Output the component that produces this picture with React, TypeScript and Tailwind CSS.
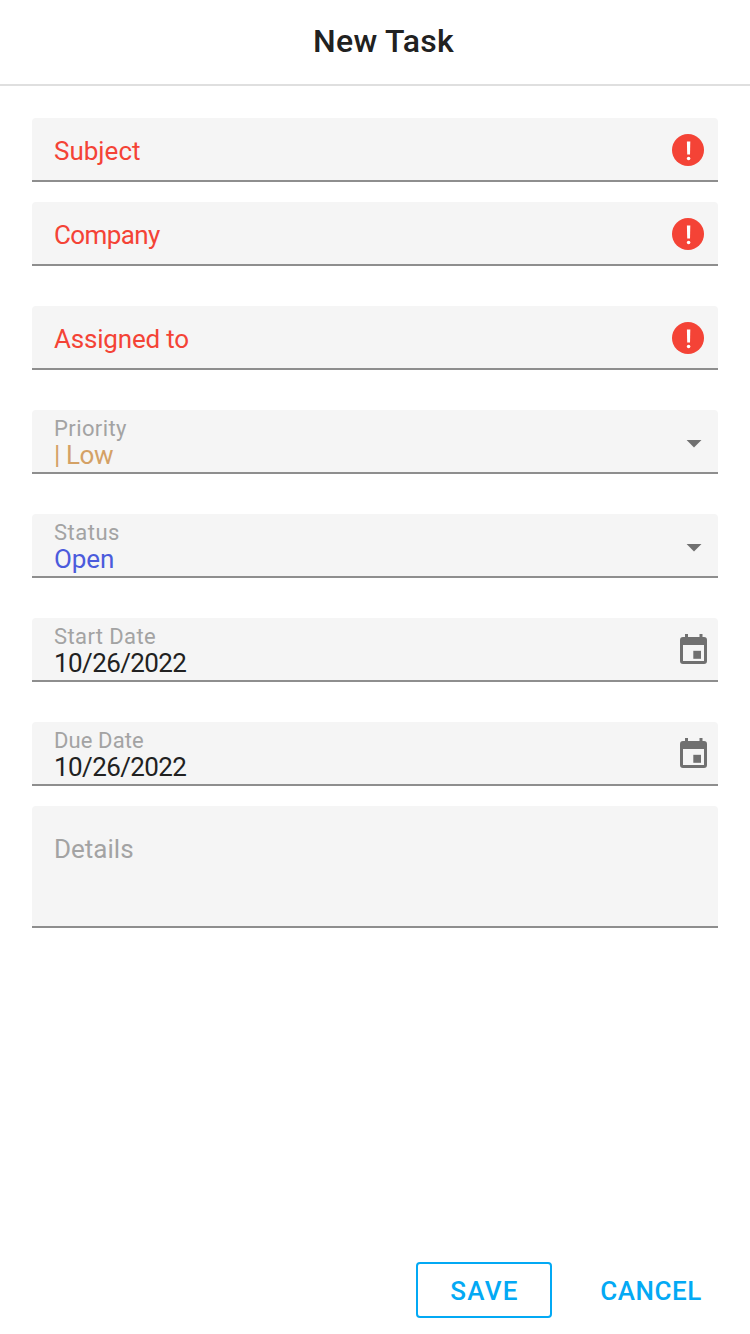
import React from "react";

function Shell({ className = "", children }: { className?: string; children: React.ReactNode }) {
  return (
    <div className={`flex h-16 items-center justify-between rounded-t-[4px] border-b-2 border-[#8e8e8e] bg-[#f5f5f5] pl-[22px] ${className}`}>
      {children}
    </div>
  );
}

function ErrorIcon() {
  return (
    <svg className="mr-[14px] mt-[2px] size-8" viewBox="0 0 32 32">
      <circle cx="16" cy="16" r="16" fill="#f44336" />
      <path d="M14.900 7.500h3.400l-.3 13h-2.800z" fill="#fff" />
      <circle cx="16.600" cy="24.500" r="1.800" fill="#fff" />
    </svg>
  );
}

function Required({ label, tracking, className = "" }: { label: string; tracking: string; className?: string }) {
  return (
    <Shell className={className}>
      <span className={`pt-[3px] text-[26px] leading-8 text-[#f44336] ${tracking}`}>{label}</span>
      <ErrorIcon />
    </Shell>
  );
}

interface FilledProps {
  label: string;
  labelStyle: string;
  value: string;
  valueStyle: string;
  icon: React.ReactNode;
}

function Filled({ label, labelStyle, value, valueStyle, icon }: FilledProps) {
  return (
    <Shell className="mt-10">
      <div className="flex flex-col pt-[3px]">
        <span className={`h-[25px] text-[22px] leading-[25px] text-[#a3a3a3] ${labelStyle}`}>{label}</span>
        <span className={`h-[28px] text-[26px] leading-[28px] ${valueStyle}`}>{value}</span>
      </div>
      {icon}
    </Shell>
  );
}

function Arrow() {
  return (
    <svg className="mr-4 mt-[5px] h-2 w-4" viewBox="0 0 16 8" fill="#707070">
      <path d="M.6 0h14.900L8 7.500z" />
    </svg>
  );
}

function Calendar() {
  return (
    <svg className="mr-[11px] mb-px h-[30px] w-[27px]" viewBox="0 0 27 30" fill="#707070">
      <path d="M5 0h3v3h11.500V0h3v3H24a3 3 0 0 1 3 3v21a3 3 0 0 1-3 3H3a3 3 0 0 1-3-3V6a3 3 0 0 1 3-3h2zM3 11v16h21V11z" fillRule="evenodd" />
      <path d="M13.300 16.800H21v8h-7.700z" />
    </svg>
  );
}

export default function App() {
  return (
    <div className="flex h-[1334px] w-[750px] flex-col bg-white font-['Roboto',sans-serif]">
      <header className="flex h-[86px] items-center justify-center border-b-2 border-[#dfdfdf] pb-[2px] pl-[17px] text-[32px] font-medium tracking-[0.3px] text-[#212121]">New Task</header>
      <main className="flex flex-1 flex-col px-8 pt-8">
        <Required label="Subject" tracking="tracking-normal" />
        <Required label="Company" tracking="tracking-[-0.6px]" className="mt-5" />
        <Required label="Assigned to" tracking="tracking-[-0.2px]" className="mt-10" />
        <Filled label="Priority" labelStyle="tracking-[0.4px]" value="| Low" valueStyle="text-[#d4a165] tracking-[-0.4px]" icon={<Arrow />} />
        <Filled label="Status" labelStyle="tracking-[0.5px]" value="Open" valueStyle="text-[#4b5bdc] tracking-[-0.1px]" icon={<Arrow />} />
        <Filled label="Start Date" labelStyle="tracking-[0.4px]" value="10/26/2022" valueStyle="text-[#212121] tracking-[-0.6px]" icon={<Calendar />} />
        <Filled label="Due Date" labelStyle="tracking-[0.1px]" value="10/26/2022" valueStyle="text-[#212121] tracking-[-0.6px]" icon={<Calendar />} />
        <div className="mt-5 h-[122px] rounded-t-[4px] border-b-2 border-[#8e8e8e] bg-[#f5f5f5] pl-[22px] pt-[27px] text-[26px] leading-8 text-[#a3a3a3]">Details</div>
      </main>
      <footer className="flex justify-end pb-4 pr-4 text-[26px] font-medium text-[#03a9f4]">
        <button className="h-14 w-[136px] rounded-[4px] border-2 border-[#03a9f4] pl-px pt-[2px] tracking-[1.3px]">SAVE</button>
        <button className="ml-4 h-14 w-[166px] pt-[2px] tracking-[0.5px]">CANCEL</button>
      </footer>
    </div>
  );
}
